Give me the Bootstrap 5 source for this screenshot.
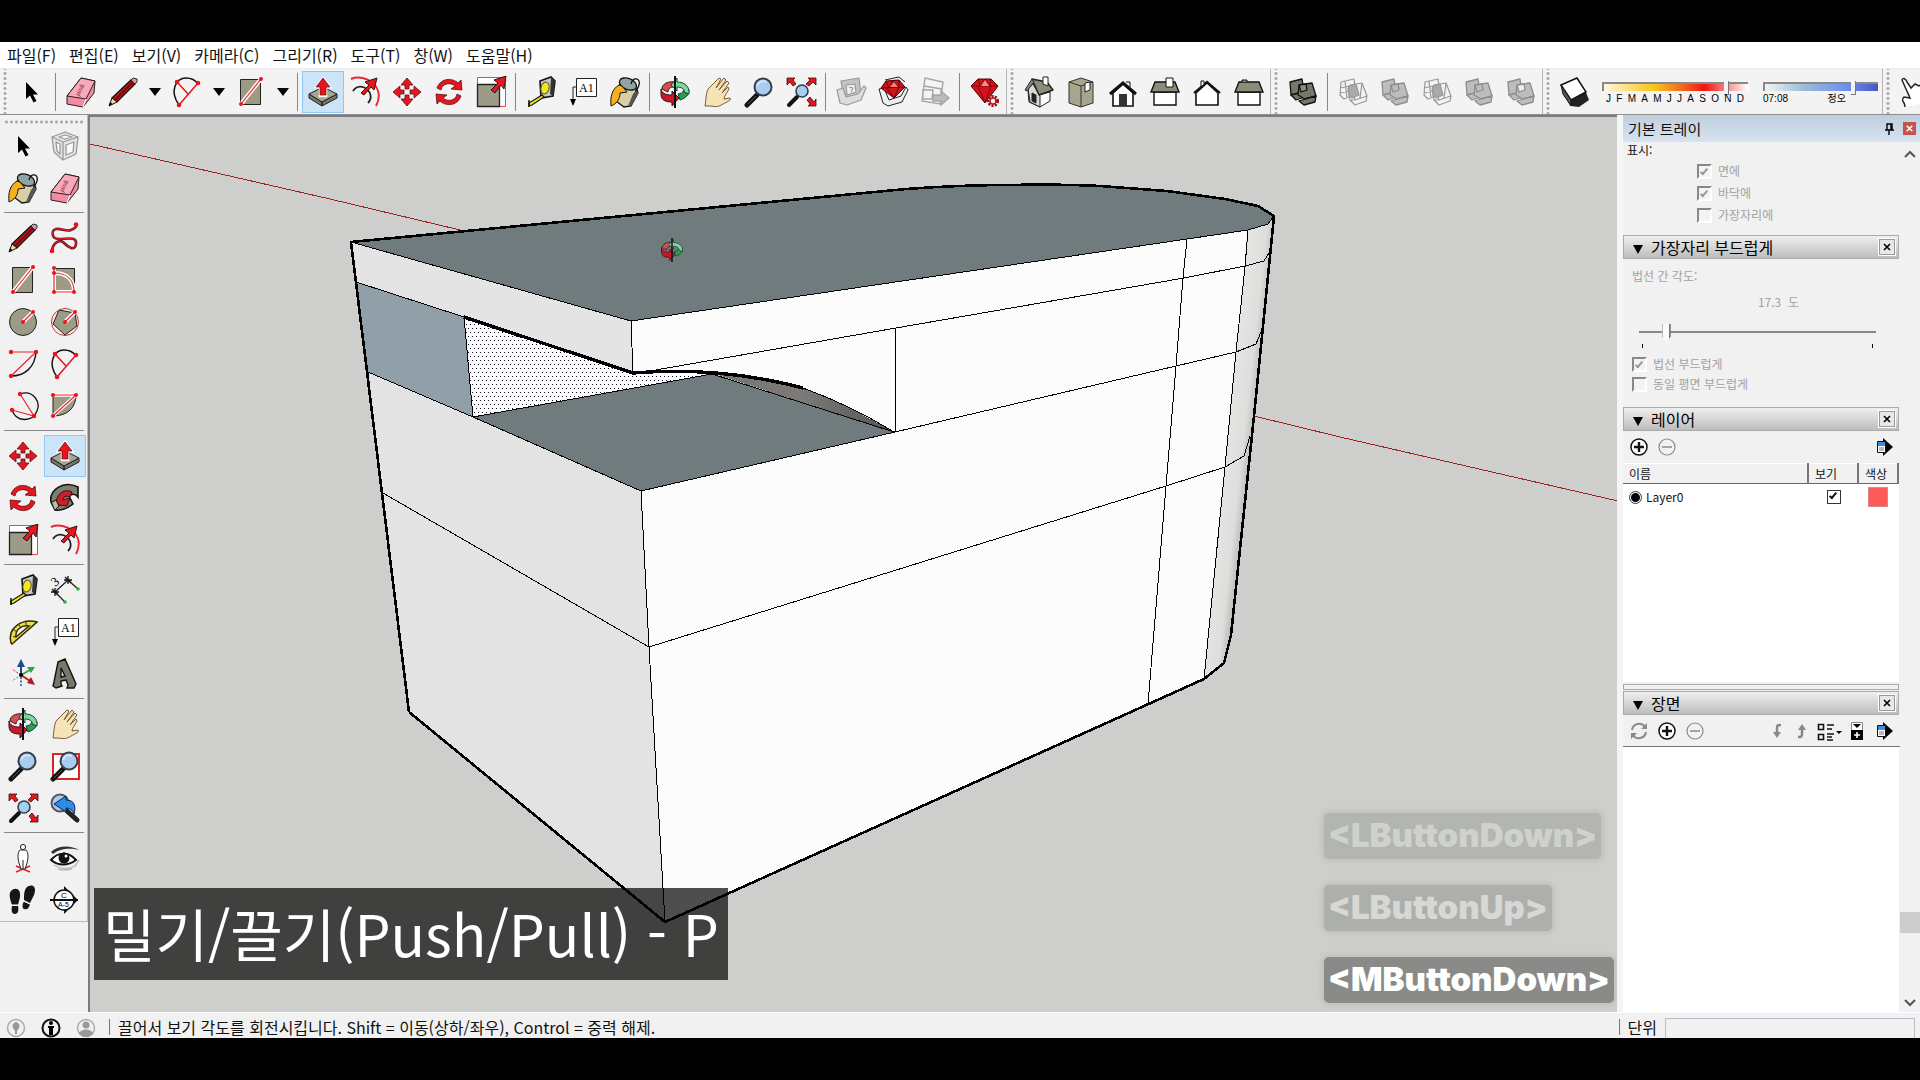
<!DOCTYPE html>
<html lang="ko">
<head>
<meta charset="utf-8">
<meta name="viewport" content="width=device-width, initial-scale=1">
<title>SketchUp</title>
<link href="https://cdn.jsdelivr.net/npm/bootstrap@5.3.0/dist/css/bootstrap.min.css" rel="stylesheet">
<style>
body{background:#000;font-family:"Noto Sans CJK KR","Noto Sans",sans-serif;font-size:16px;line-height:20px;color:#111;padding:42px 0}
.app{background:#f1f1f1;overflow:hidden;min-height:0}
.menus{background:#fff;height:26px;padding:3px 7px;gap:13px;flex:none}
.menus a{color:#111;text-decoration:none;white-space:nowrap}
.tools{background:#f3f3f3;height:47px;flex:none;border-top:1px solid #ececec;border-bottom:1px solid #8e8e8e;overflow:hidden}
.tbtn{width:42px;height:42px;flex:none;border:1px solid transparent;background:none;padding:4px;line-height:0}
.tbtn svg{width:32px;height:32px}
.tbtn.on{background:#cce4f7;border-color:#90c8f6}
.drop{width:22px;height:42px;flex:none;border:0;background:none;padding:0;line-height:0}
.vsep{width:8px;height:38px;flex:none;background:linear-gradient(#888,#888) 3px 0/1px 100% no-repeat}
.hsep{height:8px;width:80px;margin-left:2px;background:linear-gradient(#888,#888) 0 3px/100% 1px no-repeat}
.grip{width:12px;height:46px;flex:none;border-left:1px solid #b5b5b5;background:radial-gradient(circle,#aaa 1px,transparent 2px) 3px 2px/4px 5px repeat-y}
.grip.first{width:10px;border:0}
.hgrip{height:8px;margin:0 2px;background:radial-gradient(circle,#aaa 1px,transparent 2px) 0 3px/5px 4px repeat-x}
.workarea{min-height:0}
.side{width:88px;flex:none}
.sidebox{border:1px solid #bbb;border-width:0 1px 1px 0;padding:2px 0 0 2px}
.stage{border:2px solid #7c7c7c;border-width:2px 0 0 2px;background:#cececc;overflow:hidden;min-width:0}
.stage>svg{display:block;width:100%;height:100%}
.caption-box{left:4px;bottom:32px;height:92px;padding:0 9px;background:rgba(0,0,0,.69);color:#fff;font-size:57px;line-height:88px;white-space:nowrap}
.keys{left:1234px;bottom:9px;gap:26px}
.keycap{height:46px;padding:0 4px;border-radius:5px;background:#8a8a88;color:#fff;font:900 33px/44px Inter,sans-serif;box-shadow:0 0 4px 2px rgba(150,160,150,.3)}
.keycap.old{background:#adafab;color:#d7d8d5}
.keycap.older{background:#b3b5b1;color:#cfd1cd}
.season{width:146px;margin-left:6px}
.clock{width:115px;margin-left:15px}
.scale-text{font:10px/12px "Liberation Sans","Noto Sans CJK KR",sans-serif;color:#000}
.bar{appearance:none;display:block;width:100%;height:13px;margin:1px 0 0;background:none}
.bar::-webkit-slider-runnable-track{height:9px;border-top:2px solid #888;border-left:2px solid #888;background:var(--ramp)}
.bar::-webkit-slider-thumb{appearance:none;width:5px;height:14px;margin-top:-3px;background:#f3f3f3;border-right:1px solid #777;border-bottom:1px solid #777}
.year{--ramp:linear-gradient(90deg,#fff7dc,#f5c518 35%,#f08020 50%,#f21414 70%,#f7a0a0 88%,#fff)}
.day{--ramp:linear-gradient(90deg,#f3f3f3,#9bbbd8 35%,#6a8df0 75%,#4a55c0)}
.tray{width:303px;flex:none;border-left:6px solid #f5f5f5;background:#f1f1f1}
.traytitle{height:27px;flex:none;background:linear-gradient(#bfcedd,#d6e3f1);padding:0 4px 0 5px;font-size:15px}
.closered{width:13px;height:13px;border:0;padding:0;background:#c75050;line-height:0}
.traymain{min-height:0}
.traybody{width:277px;min-width:0}
.scroller{width:20px;padding:8px 0 5px}
.scroller i{display:block;width:20px;height:21px;background:#cdcdcd}
.before{flex:753}
.after{flex:66}
.small-ko{font-size:12px;line-height:16px}
.dim{color:#a2a2a2}
.opt{display:flex;align-items:center;gap:6px}
.sect{height:24px;margin-right:1px;border:1px solid #aaa;background:linear-gradient(#efefef,#bdbdbd);padding:0 3px 0 9px;line-height:20px;flex:none}
.sect button.tog{border:0;background:none;padding:0;color:#000;line-height:20px}
.xbtn{width:16px;height:16px;padding:0;border:1px solid #999;outline:1px solid #fff;background:#e8e8e8;line-height:0}
.cb{appearance:none;width:15px;height:15px;margin:0;border:2px solid;border-color:#888 #fff #fff #888;background:#f3f3f3;position:relative;flex:none}
.cb.flat{border:1px solid #333;background:#fff;width:14px;height:14px;display:block;margin-left:13px}
.cb:checked::after{content:"";position:absolute;left:3px;top:1px;width:4px;height:8px;border:solid #999;border-width:0 2px 2px 0;transform:rotate(40deg)}
.cb.flat:checked::after{border-color:#111;top:0}
.rad{appearance:none;width:13px;height:13px;margin:0;border-radius:50%;border:1px solid #333;background:radial-gradient(circle,#000 4px,#fff 5px);flex:none}
.shown{height:93px}
.shown-label{width:74px;padding-left:4px;flex:none}
.faces{padding-top:21px;gap:6px}
.soft{height:148px;padding:9px 9px 0 9px;flex:none}
.degrees{margin:10px 92px 0 0}
.angle{appearance:none;display:block;width:237px;height:18px;margin:14px 0 0 7px;background:linear-gradient(#888,#888) 0 7px/100% 2px no-repeat}
.angle::-webkit-slider-thumb{appearance:none;width:9px;height:18px;background:linear-gradient(90deg,#bbb 1px,#fafafa 1px 7px,#777 7px);clip-path:polygon(0 0,100% 0,100% 70%,50% 100%,0 70%)}
.ticks{width:231px;margin-left:10px;height:4px;border:solid #000;border-width:0 1px;margin-top:2px}
.ibtn{border:0;background:none;padding:0;width:20px;height:20px;line-height:0}
.lbar{height:32px;padding:0 5px 0 6px;flex:none}
.lists{background:#fff;margin-right:1px}
.layers{height:219px;flex:none}
.ltable{width:100%;table-layout:fixed;margin:0}
.seen{width:50px}
.hue{width:40px}
.ltable th{height:20px;padding:0 6px;font-weight:400;background:#f1f1f1;border-right:2px solid #777;border-bottom:1px solid #666;border-top:1px solid #fff}
.ltable td{padding:3px 6px;height:26px}
.swatch-red{width:20px;height:20px;background:#ff5a5a;border:1px solid #d88;margin-left:4px;padding:0;display:block}
.split{height:6px;margin:2px 1px 1px 0;border:1px solid #aaa;flex:none}
.status{height:26px;flex:none;border-top:1px solid #fff;padding:3px 5px 0 5px;line-height:22px}
.status .rule{width:1px;height:16px;background:#777}
.vcb{width:250px;height:20px;align-self:flex-end;border:1px solid #b4bfcc;border-bottom:0;background:#f1f1f1;padding:0 4px;outline:0}
</style>
<script src="https://cdn.jsdelivr.net/npm/bootstrap@5.3.0/dist/js/bootstrap.bundle.min.js"></script>
</head>
<body class="vh-100 d-flex flex-column">
<svg width="0" height="0" class="position-absolute" aria-hidden="true">
<defs>
<symbol id="cursor" viewBox="0 0 32 32"><path d="M11 6v17l4-3.5 3.500 7 3-1.500-3.500-6.500h5z" fill="#000"/></symbol>
<symbol id="eraser" viewBox="0 0 32 32"><g stroke="#222" stroke-linejoin="round"><path d="M16 2l14 3-1 12-11 14-16-3V20z" fill="#f48ba0"/><path d="M16 2l14 3-9 18L2 20z" fill="#f9a9ba"/><path d="M21 23l-3 8" stroke="#fff"/></g><text x="12" y="19" font-size="7" font-style="italic" transform="rotate(-62 14 18)" fill="#722" font-family="Liberation Serif,serif">pink</text></symbol>
<symbol id="pencil" viewBox="0 0 32 32"><path d="M5 22L24 4l4 4-18 18z" fill="#c4161c" stroke="#111" stroke-width="1.300"/><path d="M5 22l5 4-8 4z" fill="#eddca0" stroke="#111"/><path d="M2 30l1-4 2.500 2z"/><path d="M8 24L26 6" stroke="#6e0b0f" stroke-width="2"/><path d="M24 4l2-2 4 1v3l-2 2z" fill="#d99" stroke="#234"/></symbol>
<symbol id="free" viewBox="0 0 32 32"><path d="M3 29c1-9 8-12 12-8s11 9 12 1-9-5-17-5-8-9-3-10 10 3 15 1 6-4 5-6" fill="none" stroke="#701015" stroke-width="2.600"/><path d="M3 29c1-9 8-12 12-8s11 9 12 1-9-5-17-5-8-9-3-10 10 3 15 1 6-4 5-6" fill="none" stroke="#e23" stroke-width="1"/><g fill="#e8141e"><circle cx="3" cy="29" r="2.300"/><circle cx="27" cy="2.500" r="2.300"/></g></symbol>
<symbol id="arc2" viewBox="0 0 32 32"><path d="M8 29C-2 15 5 2 15 2c7 0 10 3 12 6" fill="none" stroke="#111" stroke-width="1.500"/><path d="M8 29L27 7M6 6l11 12" stroke="#e8141e" stroke-width="1.500"/><g fill="#e8141e"><circle cx="8" cy="29" r="2.300"/><circle cx="27" cy="7" r="2.300"/><circle cx="6" cy="6" r="2.300"/></g></symbol>
<symbol id="rect" viewBox="0 0 32 32"><path d="M5.500 3.500h20v25h-20z" fill="#9c9c86" stroke="#222"/><path d="M6 28L26 3" stroke="#fff" stroke-width="4"/><path d="M6 28L26 3" stroke="#e23" stroke-width="1.200"/><g fill="#e8141e"><circle cx="6" cy="28" r="2"/><circle cx="26" cy="3" r="2"/></g></symbol>
<symbol id="rrect" viewBox="0 0 32 32"><path d="M5.500 4.500h20v24h-20z" fill="#9c9c86" stroke="#222"/><path d="M5 9c14 0 20 8 20 19H5V4" fill="none" stroke="#fff" stroke-width="4"/><path d="M5 9c14 0 20 8 20 19H5V4" fill="none" stroke="#e23" stroke-width="1.200"/><g fill="#e8141e"><circle cx="5" cy="4" r="2"/><circle cx="5" cy="9" r="2"/><circle cx="5" cy="28" r="2"/><circle cx="25" cy="28" r="2"/></g></symbol>
<symbol id="circ" viewBox="0 0 32 32"><circle cx="16" cy="16" r="13.500" fill="#9c9c86" stroke="#222"/><path d="M16 16l10-10" stroke="#fff" stroke-width="4"/><path d="M16 16l10-10" stroke="#e23" stroke-width="1.300"/><g fill="#e8141e"><circle cx="16" cy="16" r="2"/><circle cx="26" cy="6" r="2"/></g></symbol>
<symbol id="poly" viewBox="0 0 32 32"><path d="M10 4l16 3 2 13-12 9L4 18z" fill="#9c9c86" stroke="#222"/><circle cx="16" cy="16" r="13.500" fill="none" stroke="#c33"/><path d="M16 16l10-10" stroke="#fff" stroke-width="4"/><path d="M16 16l10-10" stroke="#e23" stroke-width="1.300"/><g fill="#e8141e"><circle cx="16" cy="16" r="2"/><circle cx="26" cy="6" r="2"/></g></symbol>
<symbol id="arc1" viewBox="0 0 32 32"><path d="M4 28c14 0 24-9 25-24" fill="none" stroke="#111" stroke-width="1.400"/><path d="M29 4H4M29 4L4 28" stroke="#e23" stroke-width="1.200"/><g fill="#e8141e"><circle cx="4" cy="4" r="2.200"/><circle cx="29" cy="4" r="2.200"/><circle cx="4" cy="28" r="2.200"/></g></symbol>
<symbol id="arc3" viewBox="0 0 32 32"><path d="M13 4c13-5 21 8 17 17-5 12-21 11-25-1" fill="none" stroke="#111" stroke-width="1.300"/><path d="M13 4l14 22L5 20" fill="none" stroke="#e23" stroke-width="1.200"/><g fill="#e8141e"><circle cx="13" cy="4" r="2.200"/><circle cx="27" cy="26" r="2.200"/><circle cx="5" cy="20" r="2.200"/></g></symbol>
<symbol id="pie" viewBox="0 0 32 32"><path d="M4 5h23c0 12-8 21-23 21z" fill="#9c9c86" stroke="#222"/><path d="M27 5H4M27 5L4 26" stroke="#fff" stroke-width="3.500"/><path d="M27 5H4M27 5L4 26" stroke="#e23" stroke-width="1.200"/><g fill="#e8141e"><circle cx="4" cy="5" r="2"/><circle cx="27" cy="5" r="2"/><circle cx="4" cy="26" r="2"/></g></symbol>
<symbol id="push" viewBox="0 0 32 32"><g stroke="#222" stroke-linejoin="round"><path d="M2 18l13 8v4L2 22zM15 26l15-8v4l-15 8z" fill="#77776a"/><path d="M2 18l14-7 14 7-15 8z" fill="#a6a690"/></g><path d="M13 20v-9H9l7-9 7 9h-4v9z" fill="#e8141e" stroke="#fff" stroke-width="2.500"/><path d="M13 19v-8H9l7-9 7 9h-4v8z" fill="#e8141e" stroke="#511" stroke-width=".7"/></symbol>
<symbol id="offset" viewBox="0 0 32 32"><path d="M2 3c15-6 35 8 25 27" fill="none" stroke="#e23" stroke-width="2"/><path d="M4 15c8-12 24 3 15 12" fill="none" stroke="#222" stroke-width="1.800"/><path d="M12 17l8-8-4-3 12-4-3 12-3-3-7 8z" fill="#e8141e" stroke="#311"/></symbol>
<symbol id="move" viewBox="0 0 32 32"><g fill="#e8141e" stroke="#511" stroke-width=".8"><path id="mv" d="M16 2l6 7h-4v4h-4V9h-4z"/><use href="#mv" transform="rotate(90 16 16)"/><use href="#mv" transform="rotate(180 16 16)"/><use href="#mv" transform="rotate(270 16 16)"/></g></symbol>
<symbol id="rot" viewBox="0 0 32 32"><g fill="#e8141e" stroke="#511" stroke-width=".8"><path id="rt" d="M4 12C8 1 20 2 25 7l3-3 1 10-11-1 4-3C18 6 9 7 8 14z"/><use href="#rt" transform="rotate(180 16 16)"/></g></symbol>
<symbol id="scale" viewBox="0 0 32 32"><path d="M2.500 1.500h28v29h-28z" fill="#fff" stroke="#e44"/><path d="M2.500 8.500h22v22h-22z" fill="#9c9c86" stroke="#222" stroke-width="1.300"/><path d="M16 14l7-7-4-3 12-4-2 13-3-4-6 8z" fill="#e8141e" stroke="#311"/></symbol>
<symbol id="tape" viewBox="0 0 32 32"><path d="M15 5l11-4 4 4-2 15-12 2z" fill="#c9c9c0" stroke="#111" stroke-width="1.600"/><path d="M26 1l4 4-2 15-3-2z" fill="#333"/><ellipse cx="20" cy="12" rx="4" ry="6" fill="#f4e718" stroke="#554" transform="rotate(15 20 12)"/><path d="M17 19L4 27v3l3-1 12-8z" fill="#f4e718" stroke="#111" stroke-width="1.200"/><path d="M4 24v7" stroke="#111" stroke-width="1.500"/></symbol>
<symbol id="text" viewBox="0 0 32 32"><path d="M9.500 2.500h20v18h-20z" fill="#fff" stroke="#222"/><path d="M9 11H6v14" fill="none" stroke="#222"/><path d="M3 23h6l-3 7z"/><text x="12" y="16" font-size="12" font-family="Liberation Serif,serif">A1</text></symbol>
<symbol id="bucket" viewBox="0 0 32 32"><path d="M11 8l17 5 1 4-7 13-7 1-8-6z" fill="#d9cfa6" stroke="#111" stroke-width="1.300"/><path d="M28 13l1 5-6 11-4 1 5-12z" fill="#555"/><ellipse cx="19" cy="8" rx="9" ry="5.500" fill="#8fa3a8" stroke="#111" stroke-width="1.300" transform="rotate(22 19 8)"/><path d="M22 8c2-8 10-6 8 1-1 3-2 5-4 6" fill="none" stroke="#111" stroke-width="1.300"/><path d="M10 9C3 13 1 21 2 30c5-2 9-6 9-13l7-1-5-6z" fill="#f6b01e" stroke="#111"/></symbol>
<symbol id="orbit" viewBox="0 0 32 32"><path d="M3 13c0-5 6-8 12-7v5c-4 0-6 2-6 5z" fill="#d4514f" stroke="#311"/><path d="M2 13c1 4 4 6 11 6v-4l7 7-7 8v-4C6 26 2 24 2 18z" fill="#c9182b" stroke="#311"/><path d="M30 14c0 5-3 8-9 10l-2-6c3 0 5-2 6-4z" fill="#2f9a52" stroke="#143"/><path d="M30 18c1-8-5-12-12-12V2l-6 7 6 6v-4c4 0 8 2 7 5z" fill="#7fd79a" stroke="#143"/><path d="M16 0v32" stroke="#111" stroke-width="2"/></symbol>
<symbol id="hand" viewBox="0 0 32 32"><path d="M4 30c1-6 1-15 4-18L18 2l2 1-5 9 8-10 2 2-7 10 8-9 2 2-7 10 6-6 1 2c-2 4-5 7-5 10l6-1c2 2-3 4-7 6-5 3-6 3-12 2z" fill="#f7e3b8" stroke="#765a36" stroke-linejoin="round"/></symbol>
<symbol id="zoom" viewBox="0 0 32 32"><path d="M4 29l10-10" stroke="#111" stroke-width="5" stroke-linecap="round"/><path d="M5 28l8-8" stroke="#555"/><circle cx="20" cy="11" r="8.500" fill="#a8cdf0" stroke="#333f49" stroke-width="2"/><path d="M14 10c1-4 5-6 9-4" fill="none" stroke="#ddf" stroke-width="2"/></symbol>
<symbol id="zwin" viewBox="0 0 32 32"><path d="M4 4h26v25H4z" fill="#fff" stroke="#d22" stroke-width="2"/><use href="#zoom"/></symbol>
<symbol id="zext" viewBox="0 0 32 32"><path d="M4 29l8-8" stroke="#111" stroke-width="4" stroke-linecap="round"/><circle cx="17" cy="15" r="6" fill="#a8cdf0" stroke="#333f49" stroke-width="1.600"/><g fill="#e8141e" stroke="#311" stroke-width=".8"><path d="M2 2h8L8 4l3 4-3 2-3-4-3 3z"/><path d="M31 2h-8l2 2-4 4 3 2 4-4 3 3z"/><path d="M31 30h-8l2-2-3-4 3-3 4 5 2-3z"/></g></symbol>
<symbol id="zprev" viewBox="0 0 32 32"><circle cx="11" cy="11" r="8.500" fill="#a8cdf0" stroke="#556" stroke-width="2"/><path d="M18 19l10 9" stroke="#222" stroke-width="5" stroke-linecap="round"/><path d="M5 12l12-8v4c9 0 10 7 8 14-1-3-4-6-8-6v4z" fill="#2b8cea" stroke="#124"/></symbol>
<symbol id="comp" viewBox="0 0 32 32"><g fill="#e4e4e4" stroke="#999" stroke-width="1.300" stroke-linejoin="round"><path d="M3 7l13-5 13 5-2 17-13 6-9-8z"/><path d="M3 7l11 5 15-5M14 12v18"/><path d="M7 12l4 2v10l-3-3zM17 15l8-3-1 10-7 3z" fill="#fafafa"/><path d="M10 7l6-2 7 2-7 2z" fill="#fafafa"/></g></symbol>
<symbol id="wh" viewBox="0 0 32 32"><g fill="#ddd" stroke="#999" stroke-width="1.200" stroke-linejoin="round"><path d="M6 5l18-3 2 17-17 4z" fill="#c4c4c4"/><path d="M2 14l6-2 3 9 12-3 6-8 2 2-5 12-14 5-7-2z"/><path d="M11 9l9-1 1 8-9 3z" fill="#f0f0f0"/><path d="M14 11l4 1-2 4" fill="none"/></g></symbol>
<symbol id="whr" viewBox="0 0 32 32"><path d="M2 13l5-1 5 12 12-4 5-9 2 3-6 12-14 4-5-3zM8 4l14-3 6 5" fill="#eee" stroke="#222"/><path d="M4 12l5-7 13-1 6 7-11 11z" fill="#d3121c" stroke="#400"/><path d="M4 12l24-1M10 12l7 10 5-11M9 5l3 7 4-7 6 6v-7" fill="none" stroke="#6d0509"/><path d="M13 11l4-5 4 5z" fill="#ff7b7b"/></symbol>
<symbol id="layout" viewBox="0 0 32 32"><g fill="#f4f4f4" stroke="#a5a5a5" stroke-width="1.400"><path d="M6 2l18 4-3 22L3 25z"/><path d="M5 10l18 3M4 14h10l-1 9H4z"/><path d="M14 19h8v-4l8 7-8 7v-4h-8z" fill="#bbb"/></g></symbol>
<symbol id="ruby" viewBox="0 0 32 32"><path d="M2 10l7-7h13l7 7-13 17z" fill="#d3121c" stroke="#500"/><path d="M2 10h27M9 10l7 17 6-17M9 3l2 7 5-7 5 7 1-7" fill="none" stroke="#7c0a10"/><path d="M12 10l4-6 4 6z" fill="#ff8c8c"/><circle cx="24" cy="25" r="4.500" fill="#f3f3f3" stroke="#8d1016" stroke-width="3" stroke-dasharray="2 1.200"/><circle cx="24" cy="25" r="3" fill="none" stroke="#c4161c" stroke-width="1.500"/></symbol>
<symbol id="hiso" viewBox="0 0 32 32"><g stroke="#222" stroke-linejoin="round"><path d="M5 15l11 4 11-3v9l-10 6-11-5z" fill="#fff"/><path d="M5 12l5-4 7 12v11l-10-5z" fill="#d8d8d4"/><path d="M9 3l15 3 6 8-14 5z" fill="#8c8c78" stroke-width="1.400"/><path d="M9 3L2 14l2 1 6-8" fill="#8c8c78"/><path d="M20 1h5v9l-5-2z" fill="#fff"/><path d="M9 17l4 2v8l-4-2z" fill="#222"/></g></symbol>
<symbol id="htop" viewBox="0 0 32 32"><path d="M4 6l12-4 12 4v21l-12 4-12-4z" fill="#a6a68f" stroke="#333"/><path d="M16 10v21M4 6l12 4 12-4" fill="none" stroke="#333"/><path d="M20 7l5-1v8l-5 2z" fill="#fff" stroke="#222"/></symbol>
<symbol id="hfront" viewBox="0 0 32 32"><path d="M6 17L16 8l10 9v13H6z" fill="#fff" stroke="#111" stroke-width="1.600"/><path d="M3 18L16 7l13 11" fill="none" stroke="#111" stroke-width="3"/><path d="M12 18h8v12h-8z" fill="#333"/><path d="M19 6h4v5" fill="none" stroke="#111"/></symbol>
<symbol id="hright" viewBox="0 0 32 32"><path d="M5 16h22v13H5z" fill="#fff" stroke="#111" stroke-width="1.400"/><path d="M2 16l4-10h20l4 10z" fill="#8c8c78" stroke="#111" stroke-width="1.400"/><path d="M17 2h7v9h-7z" fill="#fff" stroke="#111"/></symbol>
<symbol id="hback" viewBox="0 0 32 32"><path d="M5 17L16 7l11 10v12H5z" fill="#fff" stroke="#111" stroke-width="1.600"/><path d="M3 17L16 6l13 11" fill="none" stroke="#111" stroke-width="2.200"/><path d="M10 10V5h3v3" fill="#fff" stroke="#111"/></symbol>
<symbol id="hleft" viewBox="0 0 32 32"><path d="M5 16h22v13H5z" fill="#fff" stroke="#111" stroke-width="1.400"/><path d="M2 16l4-10h20l4 10z" fill="#8c8c78" stroke="#111" stroke-width="1.400"/><path d="M9 6V4h5v2" fill="#8c8c78" stroke="#111"/></symbol>
<symbol id="solid" viewBox="0 0 32 32"><g fill="var(--f,#bdbdbd)" stroke="var(--s,#8e8e8e)" stroke-width="1.300" stroke-linejoin="round"><path d="M3 6l12-3 2 13-13 3z"/><path d="M4 19l12-3 2 5-9 3z"/><path d="M12 9l13-2 4 13-11 3-7-4z"/><path d="M18 23l11-3-1 6-11 3-5-4z"/><path d="M12 9l7-1 1 6-6 2z" fill="var(--m,#bdbdbd)"/></g></symbol>
<symbol id="solidw" viewBox="0 0 32 32"><g fill="none" stroke="#999" stroke-width="1.200" stroke-linejoin="round"><path d="M4 6l13-3 2 15-12 5-4-4zM3 17l13-3 3 4M8 5l2 17M3 12l15-3"/><path d="M13 9l12-2 5 13-12 4zM18 24l12-4-1 5-11 4-5-5zM13 24l-2-11 2-4M25 7l-2 15"/><path d="M12 10l7-2 3 11-7 3-3-3z" fill="#aaa"/></g></symbol>
<symbol id="shadow" viewBox="0 0 32 32"><path d="M4 17l8 13 8 1 10-7-4-10z" fill="#222"/><path d="M2 9l16-7 9 14-15 8z" fill="#fff" stroke="#111" stroke-width="1.500"/><path d="M2 9l2 9 8 12v-6z" fill="#555" stroke="#111"/></symbol>
<symbol id="interact" viewBox="0 0 32 32"><path d="M6 31c0-6-5-6-1-10l6 1L3 4c1-3 4-1 5 2l4 6 4-4 4 2 5-3 6 8-3 12" fill="#fff" stroke="#222" stroke-width="1.500"/></symbol>
<symbol id="follow" viewBox="0 0 32 32"><path d="M2 20C0 8 14-2 29 5v10c-3-4-7-3-9-1l4 8c-6 5-14 7-18 6z" fill="#7f7f70" stroke="#111" stroke-width="1.600"/><path d="M7 19c3-10 10-12 16-9l-2 5c-4-2-7 0-7 3l7-2-3 8-9-1z" fill="#c9202a" stroke="#311"/><path d="M3 20l4-2 3 6-4 4" fill="#b9b9a5" stroke="#111"/></symbol>
<symbol id="dim" viewBox="0 0 32 32"><path d="M6 18L19 6M6 18l10 10M19 6l10 9" stroke="#222" stroke-width="1.300" fill="none"/><path d="M2 18h8M15 6h8M6 14v8M19 2v8M3 15l6 6M16 3l6 6" stroke="#111" stroke-width="1.300"/><circle cx="16" cy="28" r="1.800" fill="#3a4"/><circle cx="29" cy="15" r="1.800" fill="#3a4"/><text x="3" y="12" font-size="13" transform="rotate(-40 6 8)" font-family="Liberation Serif,serif">3</text></symbol>
<symbol id="prot" viewBox="0 0 32 32"><path d="M4 27C0 12 15 2 30 6L5 28zM9 21l13-11C14 9 8 14 9 21z" fill="#e9de4e" fill-rule="evenodd" stroke="#332c00" stroke-width="1.500"/><path d="M6 21l3-1M7 14l3 2M12 9l2 3M19 6v3" stroke="#332c00"/></symbol>
<symbol id="axes" viewBox="0 0 32 32"><path d="M14 17V5" stroke="#1c4c8c" stroke-width="2"/><path d="M10 9l4-8 4 8z" fill="#1c4c8c"/><path d="M14 17l9-5" stroke="#3a4" stroke-width="2"/><path d="M20 9l8 0-4 6z" fill="#3a9f43"/><path d="M14 17l9 6" stroke="#b22" stroke-width="2"/><path d="M24 19l4 8-8-2z" fill="#b01822"/><path d="M14 17L5 11" stroke="#b22" stroke-dasharray="2 1.500"/><path d="M14 17l-9 6" stroke="#3a4" stroke-dasharray="2 1.500"/><path d="M14 19v10" stroke="#1c4c8c" stroke-dasharray="2 1.500" stroke-width="1.500"/><circle cx="14" cy="17" r="2"/></symbol>
<symbol id="text3" viewBox="0 0 32 32"><path d="M9 4l7-3 11 25-2 4h-7l1-3-2-5-5 1v3l1 2-6 2-3-2 1-4zM12 10v9l4-1z" fill="#77776a" fill-rule="evenodd" stroke="#111" stroke-width="1.400"/></symbol>
<symbol id="man" viewBox="0 0 32 32"><path d="M9 24l14 6M23 24L9 30" stroke="#d22" stroke-width="1.500"/><path d="M13 8c-3 3-2 9-1 13l2 6h4l2-6c1-4 2-10-1-13z" fill="#fff" stroke="#222"/><circle cx="16" cy="5" r="2.600" fill="#fff" stroke="#222"/><path d="M16 18v9" stroke="#222"/></symbol>
<symbol id="eye" viewBox="0 0 32 32"><path d="M2 10c7-7 20-7 28-2-8-2-19-2-26 4z" fill="#333"/><path d="M2 18c7-8 17-9 25 0-8 6-18 6-25 0z" fill="#fff" stroke="#111" stroke-width="2"/><circle cx="15" cy="16" r="5.500" fill="#111"/><circle cx="17" cy="14" r="1.500" fill="#fff"/><path d="M5 23c6 4 15 5 21 1l4-6M9 27c5 2 10 1 14 0" fill="none" stroke="#bbb" stroke-width="1.500"/></symbol>
<symbol id="foot" viewBox="0 0 32 32"><g fill="#161616"><path d="M5 6c5-3 9 0 8 7l-2 8H5C3 15 1 9 5 6zM5 22h6c1 4 0 8-3 8s-4-3-3-8z"/><path d="M20 3c6-4 10 0 7 8l-4 8-6-3c0-5 0-10 3-13zM17 17l6 3c-1 5-4 6-6 5s-2-4 0-8z"/></g><path d="M4 21h8M16 17l7 3" stroke="#fff"/></symbol>
<symbol id="section" viewBox="0 0 32 32"><path d="M15 2l14 14-14 14z" fill="#111"/><circle cx="15" cy="16" r="10" fill="#fff" stroke="#111" stroke-width="1.500"/><path d="M1 16h28" stroke="#111" stroke-width="2"/><g font-size="8" font-family="Liberation Sans,sans-serif"><text x="12" y="14">C</text><text x="9" y="23" font-size="7">A-5</text></g></symbol>
<symbol id="tri" viewBox="0 0 22 42"><path d="M5 17h12l-6 8z"/></symbol>
<symbol id="plus" viewBox="0 0 20 20"><circle cx="10" cy="10" r="8" fill="#fff" stroke="#111" stroke-width="1.500"/><path d="M10 5v10M5 10h10" stroke="#111" stroke-width="2.400"/></symbol>
<symbol id="minus" viewBox="0 0 20 20"><circle cx="10" cy="10" r="8" fill="none" stroke="#8a8a8a" stroke-width="1.200"/><path d="M5 10h10" stroke="#8a8a8a" stroke-width="1.500"/></symbol>
<symbol id="detail" viewBox="0 0 20 20"><path d="M8 1l10 9-10 9z"/><path d="M2.500 4.500h8v11h-8z" fill="#fff" stroke="#111"/><path d="M3 5h7v4H3z" fill="#3c8de0"/><path d="M4 11h5M4 13h5" stroke="#777"/></symbol>
<symbol id="refresh" viewBox="0 0 20 20"><path d="M3 9c1-7 10-8 13-3M17 11c-1 7-10 8-13 3" fill="none" stroke="#8a8a8a" stroke-width="2"/><path d="M18 2v6h-6zM2 18v-6h6z" fill="#8a8a8a"/></symbol>
<symbol id="dn" viewBox="0 0 20 20"><path d="M12 4c-3 0-4 0-4 3v6" fill="none" stroke="#888" stroke-width="2.500"/><path d="M4 11h8l-4 6z" fill="#888"/></symbol>
<symbol id="up" viewBox="0 0 20 20"><path d="M5 16c3 0 4 0 4-3V7" fill="none" stroke="#888" stroke-width="2.500"/><path d="M5 9h8l-4-6z" fill="#888"/></symbol>
<symbol id="view" viewBox="0 0 26 20"><path d="M1.500 3.500h5v5h-5zM1.500 13.500h5v5h-5z" fill="none" stroke="#111" stroke-width="1.600"/><path d="M10 4h7M10 8h5M10 13h7M10 16h5M10 19h6" stroke="#111" stroke-width="1.500"/><path d="M19 10h6l-3 3z"/></symbol>
<symbol id="addsc" viewBox="0 0 20 20"><path d="M4.500 1.500h11v17h-11z" fill="#fff" stroke="#888"/><path d="M6 3h8l-4 4zM4 9h12v10H4z"/><path d="M10 11v6M7 14h6" stroke="#fff" stroke-width="1.600"/></symbol>
<symbol id="ex" viewBox="0 0 14 14"><path d="M4 4l6 6M10 4l-6 6" stroke="currentColor" stroke-width="1.600"/></symbol>
</defs></svg>

<div class="app flex-grow-1 d-flex flex-column">
<nav class="menus d-flex">
<a href="#">파일(F)</a><a href="#">편집(E)</a><a href="#">보기(V)</a><a href="#">카메라(C)</a><a href="#">그리기(R)</a><a href="#">도구(T)</a><a href="#">창(W)</a><a href="#">도움말(H)</a>
</nav>
<div class="tools d-flex align-items-center flex-nowrap" role="toolbar">
<span class="grip first"></span>
<button class="tbtn" aria-label="선택"><svg><use href="#cursor"/></svg></button><span class="vsep"></span>
<button class="tbtn" aria-label="지우개"><svg><use href="#eraser"/></svg></button>
<button class="tbtn" aria-label="선"><svg><use href="#pencil"/></svg></button><button class="drop" aria-label="선 도구"><svg width="22" height="42"><use href="#tri"/></svg></button>
<button class="tbtn" aria-label="호"><svg><use href="#arc2"/></svg></button><button class="drop" aria-label="호 도구"><svg width="22" height="42"><use href="#tri"/></svg></button>
<button class="tbtn" aria-label="직사각형"><svg><use href="#rect"/></svg></button><button class="drop" aria-label="도형 도구"><svg width="22" height="42"><use href="#tri"/></svg></button><span class="vsep"></span>
<button class="tbtn on" aria-label="밀기/끌기"><svg><use href="#push"/></svg></button>
<button class="tbtn" aria-label="오프셋"><svg><use href="#offset"/></svg></button>
<button class="tbtn" aria-label="이동"><svg><use href="#move"/></svg></button>
<button class="tbtn" aria-label="회전"><svg><use href="#rot"/></svg></button>
<button class="tbtn" aria-label="배율"><svg><use href="#scale"/></svg></button><span class="vsep"></span>
<button class="tbtn" aria-label="줄자"><svg><use href="#tape"/></svg></button>
<button class="tbtn" aria-label="텍스트"><svg><use href="#text"/></svg></button>
<button class="tbtn" aria-label="페인트"><svg><use href="#bucket"/></svg></button><span class="vsep"></span>
<button class="tbtn" aria-label="궤도"><svg><use href="#orbit"/></svg></button>
<button class="tbtn" aria-label="팬"><svg><use href="#hand"/></svg></button>
<button class="tbtn" aria-label="확대/축소"><svg><use href="#zoom"/></svg></button>
<button class="tbtn" aria-label="범위 확대"><svg><use href="#zext"/></svg></button><span class="vsep"></span>
<button class="tbtn" aria-label="모델 공유"><svg><use href="#wh"/></svg></button>
<button class="tbtn" aria-label="확장 프로그램"><svg><use href="#whr"/></svg></button>
<button class="tbtn" aria-label="레이아웃"><svg><use href="#layout"/></svg></button><span class="vsep"></span>
<button class="tbtn" aria-label="확장 관리자"><svg><use href="#ruby"/></svg></button>
<span class="grip"></span>
<button class="tbtn" aria-label="등각"><svg><use href="#hiso"/></svg></button>
<button class="tbtn" aria-label="위"><svg><use href="#htop"/></svg></button>
<button class="tbtn" aria-label="정면"><svg><use href="#hfront"/></svg></button>
<button class="tbtn" aria-label="오른쪽"><svg><use href="#hright"/></svg></button>
<button class="tbtn" aria-label="뒤"><svg><use href="#hback"/></svg></button>
<button class="tbtn" aria-label="왼쪽"><svg><use href="#hleft"/></svg></button>
<span class="grip"></span>
<button class="tbtn" aria-label="외피" style="--f:#77776a;--s:#111;--m:#8c8c7c"><svg><use href="#solid"/></svg></button><span class="vsep"></span>
<button class="tbtn" aria-label="교차"><svg><use href="#solidw"/></svg></button>
<button class="tbtn" aria-label="결합"><svg><use href="#solid"/></svg></button>
<button class="tbtn" aria-label="빼기"><svg><use href="#solidw"/></svg></button>
<button class="tbtn" aria-label="자르기"><svg><use href="#solid"/></svg></button>
<button class="tbtn" aria-label="분할" style="--m:#eee"><svg><use href="#solid"/></svg></button>
<span class="grip"></span>
<button class="tbtn" aria-label="그림자"><svg><use href="#shadow"/></svg></button>
<div class="season flex-shrink-0"><input class="bar year" type="range" value="86" aria-label="날짜"><div class="scale-text d-flex justify-content-between px-1"><span>J</span><span>F</span><span>M</span><span>A</span><span>M</span><span>J</span><span>J</span><span>A</span><span>S</span><span>O</span><span>N</span><span>D</span></div></div>
<div class="clock flex-shrink-0"><input class="bar day" type="range" value="80" aria-label="시간"><div class="scale-text d-flex"><span>07:08</span><span class="ms-auto me-4 pe-2">정오</span></div></div>
<span class="grip ms-1"></span>
<button class="tbtn" aria-label="상호작용"><svg><use href="#interact"/></svg></button>
</div>

<div class="workarea flex-grow-1 d-flex">
<aside class="side"><div class="sidebox"><div class="hgrip"></div>
<div class="d-flex flex-wrap">
<button class="tbtn" aria-label="선택 도구"><svg><use href="#cursor"/></svg></button><button class="tbtn" aria-label="구성요소"><svg><use href="#comp"/></svg></button>
<button class="tbtn" aria-label="페인트통"><svg><use href="#bucket"/></svg></button><button class="tbtn" aria-label="지우개 도구"><svg><use href="#eraser"/></svg></button></div><div class="hsep"></div>
<div class="d-flex flex-wrap">
<button class="tbtn" aria-label="선"><svg><use href="#pencil"/></svg></button><button class="tbtn" aria-label="자유곡선"><svg><use href="#free"/></svg></button>
<button class="tbtn" aria-label="사각형"><svg><use href="#rect"/></svg></button><button class="tbtn" aria-label="회전 사각형"><svg><use href="#rrect"/></svg></button>
<button class="tbtn" aria-label="원"><svg><use href="#circ"/></svg></button><button class="tbtn" aria-label="다각형"><svg><use href="#poly"/></svg></button>
<button class="tbtn" aria-label="호"><svg><use href="#arc1"/></svg></button><button class="tbtn" aria-label="2점 호"><svg><use href="#arc2"/></svg></button>
<button class="tbtn" aria-label="3점 호"><svg><use href="#arc3"/></svg></button><button class="tbtn" aria-label="파이"><svg><use href="#pie"/></svg></button></div><div class="hsep"></div>
<div class="d-flex flex-wrap">
<button class="tbtn" aria-label="이동"><svg><use href="#move"/></svg></button><button class="tbtn on" aria-label="밀기/끌기"><svg><use href="#push"/></svg></button>
<button class="tbtn" aria-label="회전"><svg><use href="#rot"/></svg></button><button class="tbtn" aria-label="따라가기"><svg><use href="#follow"/></svg></button>
<button class="tbtn" aria-label="배율"><svg><use href="#scale"/></svg></button><button class="tbtn" aria-label="오프셋"><svg><use href="#offset"/></svg></button></div><div class="hsep"></div>
<div class="d-flex flex-wrap">
<button class="tbtn" aria-label="줄자"><svg><use href="#tape"/></svg></button><button class="tbtn" aria-label="치수"><svg><use href="#dim"/></svg></button>
<button class="tbtn" aria-label="각도기"><svg><use href="#prot"/></svg></button><button class="tbtn" aria-label="텍스트"><svg><use href="#text"/></svg></button>
<button class="tbtn" aria-label="축"><svg><use href="#axes"/></svg></button><button class="tbtn" aria-label="3D 텍스트"><svg><use href="#text3"/></svg></button></div><div class="hsep"></div>
<div class="d-flex flex-wrap">
<button class="tbtn" aria-label="궤도"><svg><use href="#orbit"/></svg></button><button class="tbtn" aria-label="팬"><svg><use href="#hand"/></svg></button>
<button class="tbtn" aria-label="확대"><svg><use href="#zoom"/></svg></button><button class="tbtn" aria-label="창 확대"><svg><use href="#zwin"/></svg></button>
<button class="tbtn" aria-label="범위 확대"><svg><use href="#zext"/></svg></button><button class="tbtn" aria-label="이전"><svg><use href="#zprev"/></svg></button></div><div class="hsep"></div>
<div class="d-flex flex-wrap">
<button class="tbtn" aria-label="카메라 배치"><svg><use href="#man"/></svg></button><button class="tbtn" aria-label="둘러보기"><svg><use href="#eye"/></svg></button>
<button class="tbtn" aria-label="걷기"><svg><use href="#foot"/></svg></button><button class="tbtn" aria-label="단면"><svg><use href="#section"/></svg></button></div>
</div></aside>

<main class="stage flex-grow-1 position-relative">
<svg viewBox="90 117 1527 895" preserveAspectRatio="xMinYMin slice">
<defs>
<pattern id="dots" width="4" height="8" patternUnits="userSpaceOnUse"><path d="M0 0h1v1H0zM2 4h1v1H2z" fill="#112"/></pattern>
<linearGradient id="roundbox" gradientUnits="userSpaceOnUse" x1="1226" y1="448" x2="1253" y2="451"><stop offset="0" stop-color="#e4e4e2"/><stop offset=".6" stop-color="#dededc"/><stop offset="1" stop-color="#b4b4b2"/></linearGradient>
<linearGradient id="shade"><stop offset="0" stop-color="#777471"/><stop offset=".5" stop-color="#7c7977"/><stop offset="1" stop-color="#555"/></linearGradient>
</defs>
<g shape-rendering="crispEdges" fill="none" stroke="#000">
<path d="M90 144L330 199 460 230M1254 416L1340 437 1618 501" stroke="#9c2222"/>
<g stroke="none">
<path d="M368 372L473 417 641 491 649 647 665 922 409 712z" fill="#e3e3e3"/>
<path d="M356 282L464 317 473 417 368 372z" fill="#91a0a8"/>
<path d="M464 317L633 373 674 371 712 374 473 417z" fill="#fcfcff"/>
<path d="M464 317L633 373 674 371 712 374 473 417z" fill="url(#dots)"/>
<path d="M473 417L712 374 894 432 641 491z" fill="#6f7b7d"/>
<path d="M631 321L1187 239 1248 230 1204 679 665 922 649 647 641 491 895 432 844 405 803 388 761 378 712 372 674 371 633 373z" fill="#fcfcfc"/>
<path d="M712 373L761 378 803 388 844 405 894 432z" fill="url(#shade)"/>
<path d="M351 242L631 321 633 373 464 317 356 282z" fill="#e4e4e4"/>
<path d="M1248 230L1268 224 1274 216 1231 635 1224 663 1204 679z" fill="url(#roundbox)"/>
<path d="M351 242L906 189 955 186 1008 185 1100 186 1167 191 1225 199 1258 206 1274 216 1268 224 1248 230 631 321z" fill="#6f7b7d"/>
</g>
<path d="M351 242L631 321 1187 239 1248 230 1268 224 1274 216M631 321L633 373M356 282L464 317 473 417M368 372L473 417 641 491 895 432 1176 366 1236 352 1256 344 1261 332M641 491L649 647 665 922M383 493L649 647 1166 486 1225 467 1244 456 1250 436M650 371L896 328 1184 278 1245 266 1264 261 1269 253M896 328L895 432M1187 239L1183 278 1176 366 1166 486 1148 704M1248 230L1245 267 1236 352 1225 467 1204 679M473 417L712 374 894 432Q850 405 803 388"/>
<path d="M409 712L351 242 906 189Q960 185 1008 185 1060 184 1100 186L1167 191 1225 199 1258 206 1274 216 1254 416 1231 635 1224 663 1204 679 665 922 409 712" stroke-width="2.600"/>
<path d="M464 317L633 373Q720 366 803 388" stroke-width="3.400"/>
</g>
<use href="#orbit" x="660" y="237" width="24" height="26"/>
</svg>
<div class="caption-box position-absolute">밀기/끌기(Push/Pull) - P</div>
<div class="keys position-absolute d-flex flex-column align-items-start">
<span class="keycap older">&lt;LButtonDown&gt;</span><span class="keycap old">&lt;LButtonUp&gt;</span><span class="keycap">&lt;MButtonDown&gt;</span>
</div>
</main>

<aside class="tray d-flex flex-column">
<div class="traytitle d-flex align-items-center"><span class="flex-grow-1">기본 트레이</span>
<button class="ibtn" aria-label="고정"><svg width="12" height="14"><path d="M4 2h5v6H4zM2 8h9M6 8v5M8 2v6" fill="none" stroke="#000" stroke-width="1.400"/></svg></button>
<button class="closered ms-1" aria-label="닫기"><svg width="13" height="13" color="#fff"><use href="#ex"/></svg></button></div>
<div class="traymain d-flex flex-grow-1">
<div class="traybody d-flex flex-column">
<div class="shown small-ko d-flex flex-shrink-0"><div class="shown-label">표시:</div>
<div class="faces d-flex flex-column dim">
<label class="opt"><input class="cb" type="checkbox" checked disabled>면에</label>
<label class="opt"><input class="cb" type="checkbox" checked disabled>바닥에</label>
<label class="opt"><input class="cb" type="checkbox" disabled>가장자리에</label></div></div>
<div class="sect d-flex align-items-center"><button class="tog flex-grow-1 text-start"><svg width="10" height="10" class="me-2"><path d="M0 0h10l-5 9z"/></svg>가장자리 부드럽게</button><button class="xbtn" aria-label="닫기"><svg width="14" height="14"><use href="#ex"/></svg></button></div>
<div class="soft small-ko dim"><div>법선 간 각도:</div><div class="degrees text-end">17.3 &nbsp;도</div>
<input class="angle" type="range" value="10" disabled aria-label="법선 간 각도"><div class="ticks"></div>
<label class="opt mt-2"><input class="cb" type="checkbox" checked disabled>법선 부드럽게</label>
<label class="opt mt-1"><input class="cb" type="checkbox" disabled>동일 평면 부드럽게</label></div>
<div class="sect d-flex align-items-center"><button class="tog flex-grow-1 text-start"><svg width="10" height="10" class="me-2"><path d="M0 0h10l-5 9z"/></svg>레이어</button><button class="xbtn" aria-label="닫기"><svg width="14" height="14"><use href="#ex"/></svg></button></div>
<div class="lbar d-flex align-items-center gap-2"><button class="ibtn" aria-label="추가"><svg width="20" height="20"><use href="#plus"/></svg></button><button class="ibtn" aria-label="제거"><svg width="20" height="20"><use href="#minus"/></svg></button><button class="ibtn ms-auto" aria-label="상세"><svg width="20" height="20"><use href="#detail"/></svg></button></div>
<div class="lists layers small-ko"><table class="ltable"><colgroup><col><col class="seen"><col class="hue"></colgroup>
<thead><tr><th>이름</th><th>보기</th><th>색상</th></tr></thead>
<tbody><tr><td><label class="d-flex align-items-center gap-1"><input class="rad" type="radio" checked>Layer0</label></td><td><input class="cb flat" type="checkbox" checked aria-label="보기"></td><td><button class="swatch-red" aria-label="색상"></button></td></tr></tbody></table></div>
<div class="split"></div>
<div class="sect d-flex align-items-center"><button class="tog flex-grow-1 text-start"><svg width="10" height="10" class="me-2"><path d="M0 0h10l-5 9z"/></svg>장면</button><button class="xbtn" aria-label="닫기"><svg width="14" height="14"><use href="#ex"/></svg></button></div>
<div class="lbar d-flex align-items-center gap-2 border-bottom border-secondary"><button class="ibtn" aria-label="업데이트"><svg width="20" height="20"><use href="#refresh"/></svg></button><button class="ibtn" aria-label="장면 추가"><svg width="20" height="20"><use href="#plus"/></svg></button><button class="ibtn" aria-label="장면 제거"><svg width="20" height="20"><use href="#minus"/></svg></button>
<div class="ms-auto d-flex gap-1"><button class="ibtn" aria-label="아래로"><svg width="20" height="20"><use href="#dn"/></svg></button><button class="ibtn" aria-label="위로"><svg width="20" height="20"><use href="#up"/></svg></button><button class="ibtn w-auto" aria-label="보기 옵션"><svg width="26" height="20"><use href="#view"/></svg></button><button class="ibtn" aria-label="상세 추가"><svg width="20" height="20"><use href="#addsc"/></svg></button></div><button class="ibtn" aria-label="메뉴"><svg width="20" height="20"><use href="#detail"/></svg></button></div>
<div class="lists flex-grow-1"></div>
</div>
<div class="scroller d-flex flex-column align-items-center"><svg width="12" height="8"><path d="M1 7l5-5 5 5" fill="none" stroke="#555" stroke-width="2"/></svg><div class="before"></div><i></i><div class="after"></div><svg width="12" height="8"><path d="M1 1l5 5 5-5" fill="none" stroke="#555" stroke-width="2"/></svg></div>
</div></aside>
</div>

<footer class="status d-flex align-items-center">
<svg width="100" height="22" class="flex-shrink-0"><g fill="none" stroke="#aaa" stroke-width="1.500"><circle cx="11" cy="12" r="8.500"/><circle cx="81" cy="12" r="8.500"/></g><path d="M11 6a4 4 0 0 1 3 6l-2 3v3h-2v-3l-2-3a4 4 0 0 1 3-6z" fill="#999"/><circle cx="46" cy="12" r="8.500" fill="none" stroke="#111" stroke-width="2"/><circle cx="46" cy="7" r="2"/><path d="M43 10h6v2h-1v7h-4v-7h-1z"/><circle cx="81" cy="9" r="3.500" fill="#999"/><path d="M74 18c1-6 13-6 14 0-4 4-10 4-14 0z" fill="#999"/></svg>
<span class="rule ms-1 me-2"></span><span class="flex-grow-1 text-nowrap">끌어서 보기 각도를 회전시킵니다. Shift = 이동(상하/좌우), Control = 중력 해제.</span>
<span class="rule me-2"></span><label for="vcb" class="me-2">단위</label><input id="vcb" class="vcb" type="text">
</footer>
</div>
</body>
</html>
